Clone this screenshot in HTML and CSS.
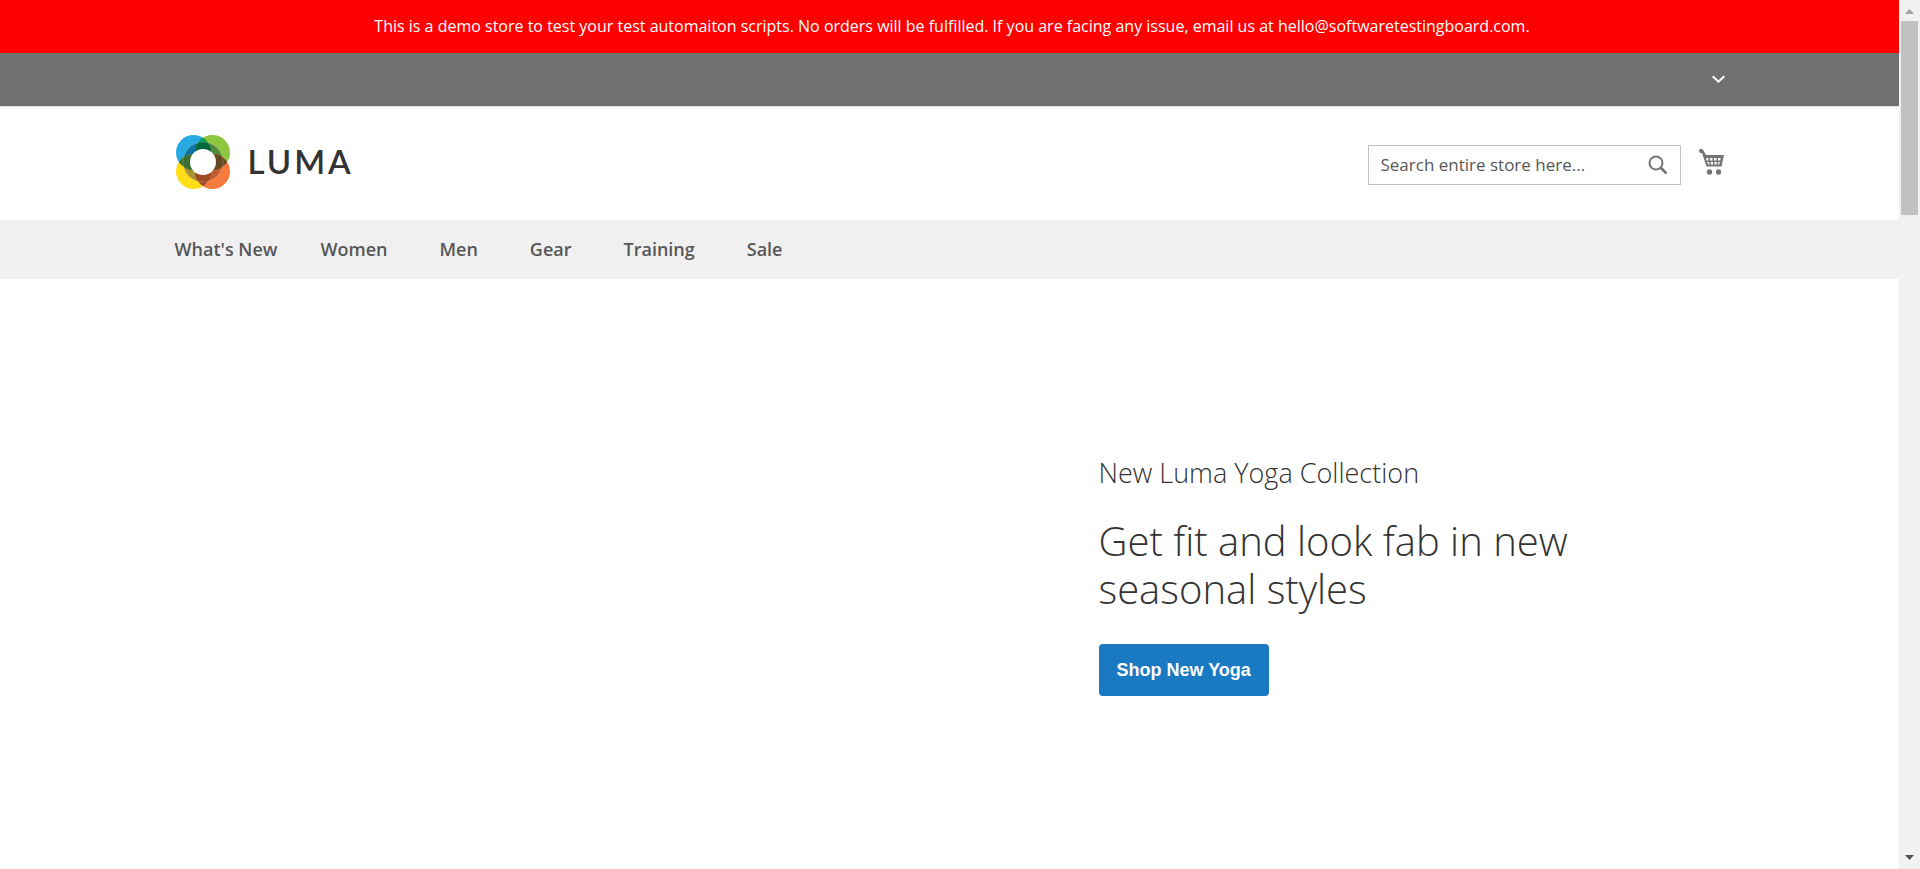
FILE: index.html
```html
<!DOCTYPE html>
<html lang="en">
<head>
<meta charset="utf-8">
<title>Home Page</title>
<link rel="stylesheet" href="styles.css">
</head>
<body>
<div class="viewport">
  <div class="page">
    <p class="notice">This is a demo store to test your test automaiton scripts. No orders will be fulfilled. If you are facing any issue, email us at hello@softwaretestingboard.com.</p>
    <header>
      <div class="panel">
        <div class="container panel-inner">
          <button class="customer-menu" type="button" aria-label="Account menu">
            <svg width="13" height="9" viewBox="0 0 13 9" fill="none" stroke="#fff" stroke-width="2"><path d="M.7 1.200 6.500 6.700 12.300 1.200"/></svg>
          </button>
        </div>
      </div>
      <div class="container header-main">
        <a class="logo" href="#" aria-label="Luma">
          <svg width="54" height="54" viewBox="0 0 54 54">
            <defs>
              <clipPath id="tl"><circle cx="17.500" cy="17.500" r="17.500"/></clipPath>
              <clipPath id="tr"><circle cx="36.500" cy="17.500" r="17.500"/></clipPath>
              <clipPath id="bl"><circle cx="17.500" cy="36.500" r="17.500"/></clipPath>
              <clipPath id="br"><circle cx="36.500" cy="36.500" r="17.500"/></clipPath>
            </defs>
            <circle cx="17.500" cy="17.500" r="17.500" fill="#27a9e1"/>
            <circle cx="36.500" cy="17.500" r="17.500" fill="#8dc63f"/>
            <circle cx="17.500" cy="36.500" r="17.500" fill="#ffde17"/>
            <circle cx="36.500" cy="36.500" r="17.500" fill="#f47b3b"/>
            <circle cx="27" cy="27" r="20" fill="#0f75a0" clip-path="url(#tl)"/>
            <circle cx="27" cy="27" r="20" fill="#558a3e" clip-path="url(#tr)"/>
            <circle cx="27" cy="27" r="20" fill="#a69532" clip-path="url(#bl)"/>
            <circle cx="27" cy="27" r="20" fill="#c06033" clip-path="url(#br)"/>
            <g clip-path="url(#tl)">
              <circle cx="36.500" cy="17.500" r="17.500" fill="#006b3a"/>
              <circle cx="17.500" cy="36.500" r="17.500" fill="#3c6e32"/>
            </g>
            <g clip-path="url(#br)">
              <circle cx="36.500" cy="17.500" r="17.500" fill="#65481f"/>
              <circle cx="17.500" cy="36.500" r="17.500" fill="#9f4a24"/>
            </g>
            <path d="M27 2.800 23.300 7Q27 6.300 30.700 7Z" fill="#00a650"/>
            <g fill="none" stroke="#fff" stroke-width=".5" opacity=".4">
              <circle cx="27" cy="27" r="20"/>
            </g>
            <circle cx="27" cy="27" r="13" fill="#fff"/>
          </svg>
          <span class="logo-name">LUMA</span>
        </a>
        <div class="tools">
          <form class="search">
            <input class="search-input" type="text" placeholder="Search entire store here..." aria-label="Search">
            <button class="search-button" type="button" aria-label="Search">
              <svg width="20" height="20" viewBox="0 0 20 20" fill="none" stroke="#757575"><circle cx="8" cy="8" r="6.500" stroke-width="2"/><path d="m12.500 12.500 6 6" stroke-width="2.600"/></svg>
            </button>
          </form>
          <a class="cart" href="#" aria-label="My Cart">
            <svg width="26" height="26" viewBox="0 0 26 26" fill="#757575">
              <path d="M0 1.500Q0 0 1.500 0H3.500L7 6H25L22.500 17.500H7.500L3 4H1.500Q0 3.500 0 1.500Z"/>
              <g fill="#fff"><path d="M7 9h2.500v2.500H7.700zM11 9h2.500v2.500H11zM15 9h2.500v2.500H15zM19 9h2.700l-.5 2.500H19zM8.300 13h1.900v2.500H9zM11.700 13h2.300v2.500h-2.300zM15.500 13h2.200v2.500h-2.200zM19.200 13h1.700l-.6 2.500h-1.100z"/></g>
              <circle cx="10.500" cy="23" r="2.700"/><circle cx="19.500" cy="23" r="2.700"/>
            </svg>
          </a>
        </div>
      </div>
    </header>
    <nav class="nav">
      <div class="container nav-list">
        <a class="nav-link nav-link-first" href="#">What's New</a>
        <a class="nav-link" href="#">Women</a>
        <a class="nav-link" href="#">Men</a>
        <a class="nav-link" href="#">Gear</a>
        <a class="nav-link" href="#">Training</a>
        <a class="nav-link" href="#">Sale</a>
      </div>
    </nav>
    <main class="container hero">
      <section class="promo">
        <p class="promo-label">New Luma Yoga Collection</p>
        <h1 class="promo-title">Get fit and look fab in new seasonal styles</h1>
        <button class="promo-button" type="button">Shop New Yoga</button>
      </section>
    </main>
  </div>
  <div class="scrollbar">
    <svg class="arrow" width="9" height="5" viewBox="0 0 9 5" fill="#a3a3a3"><path d="M0 5 4.500 0 9 5z"/></svg>
    <div class="thumb"></div>
    <svg class="arrow" width="9" height="5" viewBox="0 0 9 5" fill="#505050"><path d="M0 0 4.500 5 9 0z"/></svg>
  </div>
</div>
</body>
</html>
```
FILE: styles.css
```css
* { box-sizing: border-box; }
body {
  margin: 0;
  font-family: "Open Sans", "Noto Sans", sans-serif;
  color: #333;
  background: #fff;
}
a { text-decoration: none; }
button { border: 0; padding: 0; cursor: pointer; }
svg { display: block; flex: none; }
.viewport { display: flex; height: 100vh; overflow: hidden; }
.page { flex: 1; min-width: 0; display: flex; flex-direction: column; }
.container { width: 100%; max-width: 1600px; margin: 0 auto; padding: 0 25px; }

.notice {
  margin: 0;
  padding: 14px 25px 15px 30px;
  background: #f00;
  color: #fff;
  font-size: 16px;
  line-height: 24px;
  text-align: center;
}
.panel { background: #6e716e; border-bottom: 1px solid #e0e0e0; }
.panel-inner { display: flex; justify-content: flex-end; }
.customer-menu { padding: 22px 0; background: none; }

.header-main { display: flex; justify-content: space-between; align-items: flex-start; padding-top: 28px; padding-bottom: 31px; }
.logo { display: flex; align-items: center; gap: 18px; padding-left: 1px; color: #333; }
.logo-name { font-family: Lato, sans-serif; font-size: 33px; font-weight: 600; line-height: 52px; letter-spacing: 3px; padding-bottom: 2px; }
.tools { display: flex; align-items: flex-start; gap: 18px; padding-top: 10px; }
.search { display: flex; align-items: center; width: 313px; height: 40px; border: 1px solid #c2c2c2; padding-right: 12px; }
.search-input { flex: 1; min-width: 0; border: 0; outline: 0; padding: 0 12px; font: 17px/24px "Open Sans", sans-serif; color: #333; background: none; }
.search-input::placeholder { color: #575757; opacity: 1; }
.search-button { background: none; }
.cart { padding-top: 4px; }

.nav { background: #f0f0f0; }
.nav-list { display: flex; gap: 22px; }
.nav-link { padding: 0 15px; color: #575757; font-size: 18px; font-weight: 600; line-height: 59px; }
.nav-link-first { padding: 0 6px 0 0; }

.hero { flex: 1; display: flex; align-items: center; justify-content: flex-end; }
.promo { width: 40%; margin-right: 6px; }
.promo-label { margin: 0 0 23px; font-size: 27px; font-weight: 300; line-height: 42px; }
.promo-title { margin: 0 0 31px; font-size: 40px; font-weight: 300; line-height: 48px; }
.promo-button { padding: 0 18px; border-radius: 4px; background: #1979c3; color: #fff; font: 700 18px/52px "Liberation Sans", Arial, sans-serif; }

.scrollbar { width: 21px; padding: 9px 2px; background: #f1f1f1; display: flex; flex-direction: column; align-items: center; gap: 7px; }
.thumb { width: 17px; height: 194px; background: #c1c1c1; }
.arrow:last-child { margin-top: auto; }
```
